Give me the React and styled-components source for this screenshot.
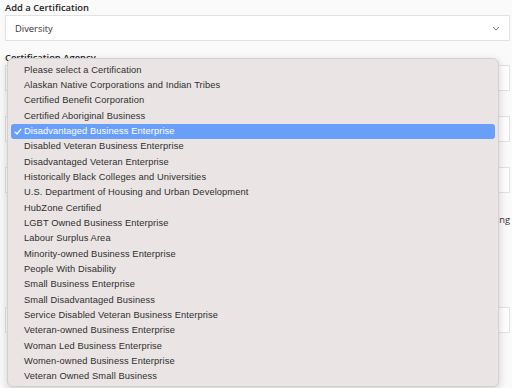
import React from 'react';
import styled, { createGlobalStyle } from 'styled-components';

const GlobalStyle = createGlobalStyle`
    body {
        margin: 0;
        background: #fafafa;
        font-family: "Open Sans", "Noto Sans", sans-serif;
    }
`

const Page = styled.div`
    position: relative;
    width: 512px;
    height: 388px;
    overflow: hidden;
    box-sizing: border-box;
    padding: 0 2px 0 5px;
`

const Field = styled.div`
    display: flex;
    flex-direction: column;
    margin-bottom: ${props => props.gap || 10}px;
`

const Label = styled.div`
    font-size: 9.4px;
    font-weight: 600;
    color: #222;
    height: 15px;
    line-height: 15px;
`

const SelectBox = styled.div`
    height: 26px;
    box-sizing: border-box;
    background: #fff;
    border: 1px solid #e2e2e2;
    display: flex;
    align-items: center;
    justify-content: space-between;
    padding: 0 9px 0 9px;
    font-size: 9.4px;
    color: #333;
`

const Chevron = () => (
    <svg width="8" height="5" viewBox="0 0 8 5">
        <path d="M1 1 L4 4 L7 1" fill="none" stroke="#666" strokeWidth="0.9" />
    </svg>
)

const Note = styled.div`
    font-size: 9.4px;
    color: #333;
    height: 20px;
    line-height: 20px;
    text-align: right;
    margin-bottom: 62px;
`

const Menu = styled.ul`
    position: absolute;
    left: 7px;
    top: 58px;
    width: 492px;
    height: 329px;
    box-sizing: border-box;
    margin: 0;
    padding: 3.5px 3px 3px 3px;
    list-style: none;
    background: #eae5e4;
    border: 1px solid #d4d0cf;
    border-radius: 6px;
    box-shadow: 0 3px 10px rgba(0, 0, 0, 0.18);
    font-family: "Liberation Sans", Arial, sans-serif;
`

const Option = styled.li`
    position: relative;
    height: 15.35px;
    line-height: 15.35px;
    padding-left: 13px;
    font-size: 9.3px;
    letter-spacing: 0.1px;
    color: ${props => props.selected ? '#fff' : '#2e2e2e'};
    background: ${props => props.selected ? '#6a9ff9' : 'transparent'};
    border-radius: 3px;
    white-space: nowrap;
`

const Check = styled.svg`
    position: absolute;
    left: 3px;
    top: 4px;
`

const options = [
    'Please select a Certification',
    'Alaskan Native Corporations and Indian Tribes',
    'Certified Benefit Corporation',
    'Certified Aboriginal Business',
    'Disadvantaged Business Enterprise',
    'Disabled Veteran Business Enterprise',
    'Disadvantaged Veteran Enterprise',
    'Historically Black Colleges and Universities',
    'U.S. Department of Housing and Urban Development',
    'HubZone Certified',
    'LGBT Owned Business Enterprise',
    'Labour Surplus Area',
    'Minority-owned Business Enterprise',
    'People With Disability',
    'Small Business Enterprise',
    'Small Disadvantaged Business',
    'Service Disabled Veteran Business Enterprise',
    'Veteran-owned Business Enterprise',
    'Woman Led Business Enterprise',
    'Women-owned Business Enterprise',
    'Veteran Owned Small Business',
]

const selected = 'Disadvantaged Business Enterprise'

const App = () => {
    return (
        <Page>
            <GlobalStyle />
            <Field gap={9}>
                <Label>Add a Certification</Label>
                <SelectBox>Diversity<Chevron /></SelectBox>
            </Field>
            <Field gap={10}>
                <Label>Certification Agency</Label>
                <SelectBox><span /><Chevron /></SelectBox>
            </Field>
            <Field gap={10}>
                <Label />
                <SelectBox><span /><Chevron /></SelectBox>
            </Field>
            <Field gap={17}>
                <Label />
                <SelectBox><span /><Chevron /></SelectBox>
            </Field>
            <Note>Show this certification on your public listing</Note>
            <Field>
                <Label />
                <SelectBox><span /><Chevron /></SelectBox>
            </Field>
            <Menu>
                {options.map(o => (
                    <Option key={o} selected={o === selected}>
                        {o === selected && (
                            <Check width="8" height="7" viewBox="0 0 8 7">
                                <path d="M0.8 3.8 L3 6 L7.2 0.8" fill="none" stroke="#fff" strokeWidth="1.3" />
                            </Check>
                        )}
                        {o}
                    </Option>
                ))}
            </Menu>
        </Page>
    );
}

export default App;
